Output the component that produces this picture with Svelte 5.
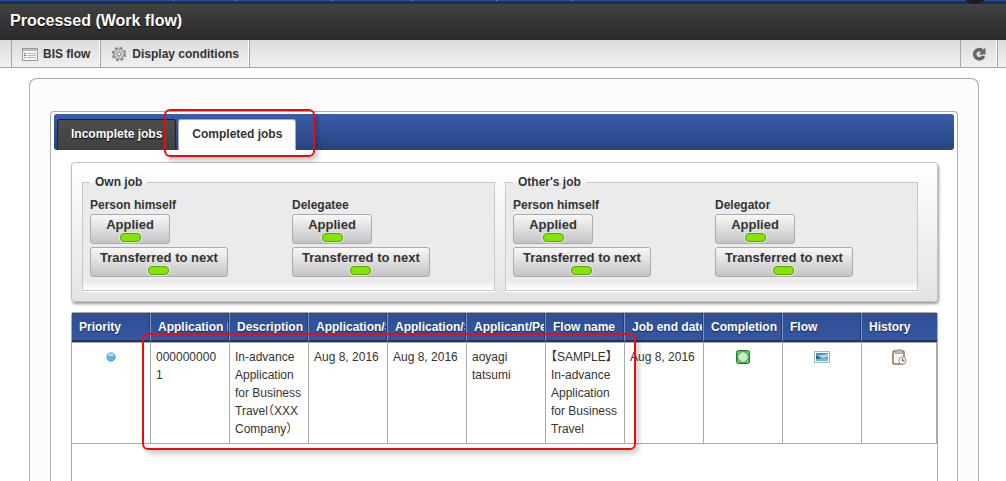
<script>
  const navWidths = [174, 63, 96, 79, 85, 76];

  const groups = [
    { title: 'Own job', people: ['Person himself', 'Delegatee'] },
    { title: "Other's job", people: ['Person himself', 'Delegator'] }
  ];
  const filters = ['Applied', 'Transferred to next'];

  const columns = [
    'Priority',
    'Application I',
    'Description',
    'Application/S',
    'Application/S',
    'Applicant/Pe',
    'Flow name',
    'Job end date',
    'Completion s',
    'Flow',
    'History'
  ];

  const jobs = [
    {
      number: '0000000001',
      description: 'In-advance Application for Business Travel（XXX Company）',
      applied: 'Aug 8, 2016',
      standard: 'Aug 8, 2016',
      applicant: 'aoyagi tatsumi',
      flow: '【SAMPLE】 In-advance Application for Business Travel',
      ended: 'Aug 8, 2016'
    }
  ];

  let activeTab = $state('Completed jobs');
  let enabled = $state({});

  function toggle(key) {
    enabled[key] = enabled[key] === false;
  }
</script>

<div class="page">
  <div class="nav-strip">
    {#each navWidths as width}
      <span class="nav-cell" style:width={`${width}px`}></span>
    {/each}
    <span class="knob"></span>
  </div>

  <header><h1>Processed (Work flow)</h1></header>

  <div class="toolbar">
    <button class="tool">
      <svg width="16" height="16" viewBox="0 0 16 16" aria-hidden="true">
        <rect x=".5" y="2.5" width="15" height="12" fill="#f4f4f4" stroke="#999" />
        <path d="M1 4h14" stroke="#bbb" stroke-width="2" />
        <path d="M5 7.5h9M5 9.5h9M5 11.5h9" stroke="#bbb" />
        <path d="M2 7.5h2" stroke="#5a5" />
        <path d="M2 9.5h2" stroke="#66a" />
        <path d="M2 11.5h2" stroke="#999" />
      </svg>
      BIS flow
    </button>
    <button class="tool">
      <svg width="16" height="16" viewBox="0 0 16 16" aria-hidden="true">
        <circle cx="8" cy="8" r="6" fill="none" stroke="#8a8a8a" stroke-width="2.4" stroke-dasharray="2.8 1.912" />
        <circle cx="8" cy="8" r="5" fill="#ddd" stroke="#8a8a8a" />
        <path d="M8 3.5v9M3.5 8h9M5 5l6 6M11 5l-6 6" stroke="#aaa" />
        <circle cx="8" cy="8" r="2" fill="#eee" stroke="#888" />
      </svg>
      Display conditions
    </button>
    <button class="tool refresh" aria-label="Refresh">
      <svg width="16" height="16" viewBox="0 0 16 16" aria-hidden="true">
        <path d="M11.3 4.8A4.6 4.6 0 1 0 12.5 10" fill="none" stroke="#666" stroke-width="3.6" />
        <path d="M14.5 1.5v7H7.5z" fill="#666" />
      </svg>
    </button>
  </div>

  <main>
    <div class="box">
      <div class="tabs" role="tablist">
        {#each ['Incomplete jobs', 'Completed jobs'] as tab}
          <div class="tab-slot">
            <button
              class="tab"
              class:active={activeTab === tab}
              role="tab"
              aria-selected={activeTab === tab}
              onclick={() => (activeTab = tab)}
            >
              {tab}
            </button>
            {#if tab === 'Completed jobs'}
              <span class="callout tab-callout"></span>
            {/if}
          </div>
        {/each}
      </div>

      <div class="content">
        <div class="filters">
          {#each groups as group}
            <fieldset>
              <legend>{group.title}</legend>
              {#each group.people as person}
                <div class="person">
                  <span>{person}</span>
                  {#each filters as filter}
                    <button
                      class="toggle"
                      class:off={enabled[group.title + person + filter] === false}
                      onclick={() => toggle(group.title + person + filter)}
                    >
                      {filter}
                      <i></i>
                    </button>
                  {/each}
                </div>
              {/each}
            </fieldset>
          {/each}
        </div>

        <div class="grid">
          <table>
            <thead>
              <tr>
                {#each columns as column}
                  <th><div>{column}</div></th>
                {/each}
              </tr>
            </thead>
            <tbody>
              {#each jobs as job}
                <tr>
                  <td class="icon">
                    <svg width="16" height="16" viewBox="0 0 16 16" aria-label="Normal">
                      <circle cx="8" cy="8" r="4.2" fill="#5db4e6" stroke="#5aa5d2" />
                      <path d="M5 7a3 3 0 0 1 6 0z" fill="#a8dcf7" />
                    </svg>
                  </td>
                  <td class="number">{job.number}</td>
                  <td>{job.description}</td>
                  <td>{job.applied}</td>
                  <td>{job.standard}</td>
                  <td>{job.applicant}</td>
                  <td>{job.flow}</td>
                  <td>{job.ended}</td>
                  <td class="icon">
                    <svg width="16" height="16" viewBox="0 0 16 16" aria-label="Completed">
                      <rect x="1.5" y="1.5" width="13" height="13" rx="2" fill="#35b535" stroke="#247a2b" />
                      <path d="M3 5V3h2M11 3h2v2M13 11v2h-2M5 13H3v-2" fill="none" stroke="#7fe07f" />
                      <circle cx="8" cy="8" r="4.5" fill="#d2e2d0" stroke="#b3e2b0" />
                    </svg>
                  </td>
                  <td class="icon">
                    <svg width="16" height="16" viewBox="0 0 16 16" aria-label="Flow">
                      <rect x=".5" y="2.5" width="15" height="11" fill="#fff" stroke="#9dbcc8" />
                      <rect x="2" y="4" width="12" height="8" fill="#a9d8f2" />
                      <path d="M2 4h12v1L2 7z" fill="#3f8fdb" />
                      <path d="M2 7c3 0 4 2 7 2s4-1 5-1v1L2 10z" fill="#225878" />
                      <path d="M2 10l12-1v3H2z" fill="#79b8bd" />
                    </svg>
                  </td>
                  <td class="icon">
                    <svg width="16" height="16" viewBox="0 0 16 16" aria-label="History">
                      <rect x="2" y="2" width="11" height="13" rx="1" fill="#fafafa" stroke="#a5694f" stroke-width="1.5" />
                      <path d="M4 4.5V2h2.500V.5h3V2H12v2.500z" fill="#bbb" stroke="#888" stroke-width=".6" />
                      <circle cx="11.5" cy="11.5" r="3.7" fill="#f2f2f2" stroke="#999" />
                      <path d="M11.5 9.5v2.300h2" fill="none" stroke="#555" />
                    </svg>
                  </td>
                </tr>
              {/each}
            </tbody>
          </table>
          <span class="callout row-callout"></span>
        </div>
      </div>
    </div>
  </main>
</div>

<style>
  :global(body) {
    background: #fff;
  }

  .page {
    display: flex;
    flex-direction: column;
    height: 100vh;
    overflow: hidden;
    font: 12px/18px "Liberation Sans", Arial, "Noto Sans CJK JP", sans-serif;
    color: #333;
  }

  button {
    margin: 0;
    font: inherit;
    font-weight: bold;
    color: inherit;
    cursor: pointer;
  }

  svg {
    display: block;
  }

  .nav-strip {
    position: relative;
    display: flex;
    flex: none;
    height: 4px;
    overflow: hidden;
    background: linear-gradient(#27498d 1px, #1d2e57 1px);
  }

  .nav-cell {
    box-sizing: border-box;
    height: 1px;
    border-right: 1px solid #6f8cc6;
  }

  .knob {
    position: absolute;
    right: 18px;
    bottom: 0;
    width: 26px;
    height: 26px;
    border-radius: 50%;
    background: #1b1d20;
  }

  header {
    flex: none;
    height: 36px;
    padding: 0 10px;
    background: linear-gradient(#424242, #2a2a2a);
  }

  h1 {
    margin: 0;
    font-size: 16px;
    line-height: 34px;
    color: #fff;
    text-shadow: 0 1px 1px #000;
  }

  .toolbar {
    display: flex;
    flex: none;
    height: 27px;
    padding: 0 8px 0 11px;
    border-bottom: 1px solid #a5a5a5;
    background: linear-gradient(#dcdcdc, #f0f0f0);
  }

  .tool {
    display: flex;
    align-items: center;
    gap: 5px;
    padding: 0 10px;
    border: 0;
    border-right: 1px solid #a5a5a5;
    background: none;
    box-shadow: inset -1px 0 #fff;
  }

  .tool:first-child,
  .refresh {
    border-left: 1px solid #a5a5a5;
  }

  .refresh {
    margin-left: auto;
  }

  main {
    display: flex;
    flex: 1;
    margin: 10px 27px 0 29px;
    padding: 32px 20px 0;
    border: 1px solid #aaa;
    border-bottom: 0;
    border-radius: 8px 8px 0 0;
    background: #fcfcff;
  }

  .box {
    display: flex;
    flex: 1;
    flex-direction: column;
    min-width: 0;
    padding: 2px 3px 0;
    border: 1px solid #aaa;
    border-bottom: 0;
    border-radius: 4px 4px 0 0;
    background: #fff;
  }

  .tabs {
    display: flex;
    flex: none;
    align-items: flex-end;
    gap: 2px;
    height: 36px;
    padding: 0 3px;
    border-radius: 3px;
    background: linear-gradient(#3a5dab, #27437f);
  }

  .tab-slot {
    position: relative;
  }

  .tab {
    display: block;
    height: 31px;
    padding: 0 13px 3px;
    border: 1px solid #222;
    border-bottom: 0;
    border-radius: 3px 3px 0 0;
    background: linear-gradient(#4d4d4d, #404040);
    color: #fff;
    text-shadow: 0 1px 1px #000;
  }

  .tab.active {
    border-color: #aaa;
    background: #fff;
    color: #333;
    text-shadow: none;
  }

  .callout {
    position: absolute;
    z-index: 1;
    box-sizing: border-box;
    border: 2px solid #f00b0b;
    border-radius: 6px;
    box-shadow: 3px 4px 5px rgba(0, 0, 0, 0.2);
    pointer-events: none;
  }

  .tab-callout {
    inset: -10px -19px -7px -14px;
  }

  .content {
    display: flex;
    flex: 1;
    flex-direction: column;
    padding: 12px 16px 0 17px;
  }

  .filters {
    display: flex;
    gap: 10px;
    padding: 10px 19px 10px 10px;
    border: 1px solid #c2c2c2;
    border-radius: 4px;
    background: linear-gradient(#fff, #e4e4e4);
    box-shadow: 1px 2px 3px rgba(0, 0, 0, 0.4);
  }

  fieldset {
    display: grid;
    flex: 1;
    grid-template-columns: 1fr 1fr;
    min-width: 0;
    margin: 0;
    padding: 5px 0 10px 7px;
    border: 1px solid #c8c8c8;
    background: linear-gradient(#ebebeb 92%, #fff);
    box-shadow: 0 1px #fff;
    font-weight: bold;
  }

  legend {
    padding: 0 5px;
  }

  .person {
    display: flex;
    flex-direction: column;
    align-items: flex-start;
  }

  .toggle {
    display: flex;
    flex-direction: column;
    align-items: center;
    justify-content: space-between;
    min-width: 80px;
    height: 30px;
    margin-bottom: 3px;
    padding: 2px 9px 1px;
    border: 1px solid #aaa;
    border-radius: 3px;
    background: linear-gradient(#f8f8f8, #c4c4c4);
    font-size: 13px;
    line-height: 16px;
  }

  .toggle i {
    box-sizing: border-box;
    width: 21px;
    height: 9px;
    border: 1px solid #5f9c13;
    border-radius: 4px;
    background: #83e505;
    box-shadow: 0 0 1px 1px #e8e8e8;
  }

  .toggle.off i {
    border-color: #888;
    background: #bbb;
  }

  .grid {
    position: relative;
    flex: 1;
    margin-top: 10px;
    border: 1px solid #aaa;
    border-bottom: 0;
    border-radius: 3px 3px 0 0;
  }

  table {
    width: 100%;
    table-layout: fixed;
    border-spacing: 0;
  }

  th,
  td {
    box-sizing: border-box;
    width: 79px;
    border-right: 1px solid #aaa;
    text-align: left;
  }

  th:last-child,
  td:last-child {
    width: auto;
  }

  th {
    height: 29px;
    padding: 0 1px 0 7px;
    border-right-color: #7f93c4;
    border-bottom: 2px solid #203261;
    background: linear-gradient(#2f4f91, #3557a3);
    box-shadow: inset -1px 0 #243c75;
    color: #fff;
    text-shadow: 0 1px 1px #14244c;
  }

  th:last-child {
    border-right: 0;
    box-shadow: none;
  }

  th div {
    overflow: hidden;
    white-space: nowrap;
  }

  td {
    padding: 5px;
    border-top: 1px solid #aaa;
    border-bottom: 1px solid #aaa;
    vertical-align: top;
    overflow-wrap: anywhere;
    font-feature-settings: "halt";
  }

  td.number {
    padding-right: 8px;
  }

  .icon svg {
    margin: 1px auto;
  }

  .row-callout {
    top: 20px;
    left: 70px;
    width: 494px;
    height: 117px;
  }
</style>
